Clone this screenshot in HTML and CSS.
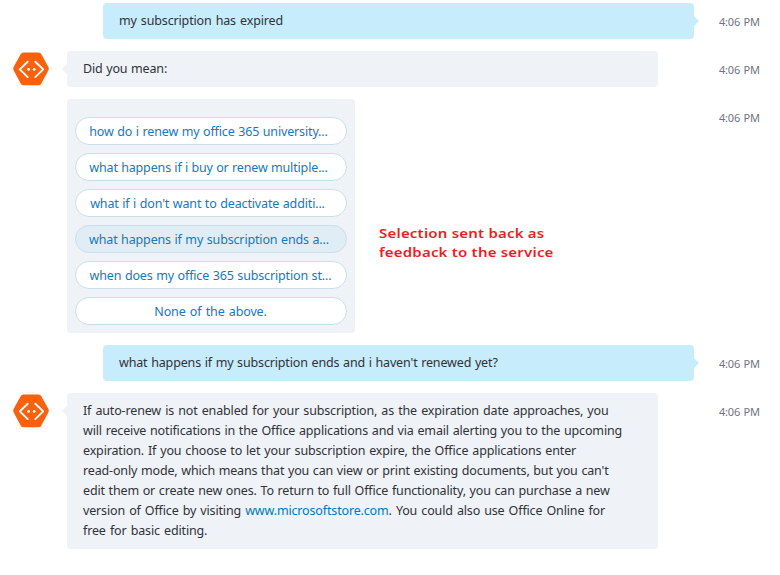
FILE: index.html
```html
<!DOCTYPE html>
<html lang="en">
<head>
<meta charset="utf-8">
<title>Bot conversation</title>
<link rel="stylesheet" href="styles.css">
</head>
<body>
<svg class="defs" width="0" height="0" aria-hidden="true">
  <symbol id="bot" viewBox="0 0 36 34">
    <path d="M10.5 .5H25.5Q27.3 .5 28.2 2L35.3 14.8Q36.2 16.7 35.3 18.6L28.2 31.7Q27.3 33.2 25.5 33.2H10.5Q8.7 33.2 7.8 31.7L.7 18.6Q-.2 16.7 .7 14.8L7.8 2Q8.7 .5 10.5 .5Z" fill="#f9610d"/>
    <path d="M14.7 9.7L6.8 17.4L14.7 25.1M22.3 9.7L30.2 17.4L22.3 25.1" fill="none" stroke="#fff" stroke-width="1.9" stroke-linecap="round" stroke-linejoin="round"/>
    <circle cx="15.6" cy="17.4" r="1.4" fill="#fff"/><circle cx="21.2" cy="17.4" r="1.4" fill="#fff"/>
  </symbol>
  <symbol id="tail" viewBox="0 0 6 16"><path d="M6 0Q5.5 3 3 5L.8 7Q0 8 .8 9L3 11Q5.5 13 6 16Z" fill="currentColor"/></symbol>
</svg>
<main class="chat">
  <div class="row user">
    <div class="bubble"><p class="t1">my subscription has expired</p><svg class="tail"><use href="#tail"/></svg></div>
    <time>4:06 PM</time>
  </div>
  <div class="row">
    <svg class="avatar"><use href="#bot"/></svg>
    <div class="bubble"><p class="t2">Did you mean:</p><svg class="tail"><use href="#tail"/></svg></div>
    <time>4:06 PM</time>
  </div>
  <div class="row">
    <div class="card">
      <button class="b1">how do i renew my office 365 university...</button>
      <button class="b2">what happens if i buy or renew multiple...</button>
      <button class="b3">what if i don't want to deactivate additi...</button>
      <button class="b4 selected">what happens if my subscription ends a...</button>
      <button class="b5">when does my office 365 subscription st...</button>
      <button class="b6">None of the above.</button>
      <aside class="note"><span>Selection sent back as</span><span>feedback to the service</span></aside>
    </div>
    <time>4:06 PM</time>
  </div>
  <div class="row user">
    <div class="bubble"><p class="t3">what happens if my subscription ends and i haven't renewed yet?</p><svg class="tail"><use href="#tail"/></svg></div>
    <time>4:06 PM</time>
  </div>
  <div class="row">
    <svg class="avatar"><use href="#bot"/></svg>
    <div class="bubble">
      <p class="a1">If auto-renew is not enabled for your subscription, as the expiration date approaches, you</p>
      <p class="a2">will receive notifications in the Office applications and via email alerting you to the upcoming</p>
      <p class="a3">expiration. If you choose to let your subscription expire, the Office applications enter</p>
      <p class="a4">read-only mode, which means that you can view or print existing documents, but you can't</p>
      <p class="a5">edit them or create new ones. To return to full Office functionality, you can purchase a new</p>
      <p class="a6">version of Office by visiting <a href="#">www.microsoftstore.com</a>. You could also use Office Online for</p>
      <p class="a7">free for basic editing.</p>
      <svg class="tail"><use href="#tail"/></svg>
    </div>
    <time>4:06 PM</time>
  </div>
</main>
</body>
</html>
```
FILE: styles.css
```css
* { box-sizing: border-box; }
body { margin: 0; background: #fff; color: #303238; font: 12.5px/20px "Noto Sans", sans-serif; }
.defs { position: absolute; }
.chat { width: 780px; height: 575px; padding-top: 3px; display: flex; flex-direction: column; gap: 12px; overflow: hidden; }
.row { display: grid; grid-template-columns: 54px 627px 1fr; padding-left: 13px; align-items: start; }
.avatar { grid-column: 1; grid-row: 1; width: 36px; height: 34px; margin-top: 1px; }
.bubble { grid-column: 2; grid-row: 1; position: relative; width: 591px; min-height: 36px; padding: 8px 16px; border-radius: 4px; background: #eff2f7; }
.user .bubble { margin-left: 36px; background: #c7ecfc; }
.tail { position: absolute; left: -5px; top: 10px; width: 6px; height: 16px; color: #eff2f7; }
.user .tail { left: auto; right: -5px; color: #c7ecfc; transform: scaleX(-1); }
p { margin: 0; white-space: nowrap; letter-spacing: -.15px; }
a { color: #0078c1; text-decoration: none; }
time { grid-column: 3; grid-row: 1; padding: 9px 0 0 25px; font-size: 11px; letter-spacing: -.2px; word-spacing: .8px; color: #6d7480; white-space: nowrap; }
.card { grid-column: 2; grid-row: 1; position: relative; width: 288px; height: 234px; padding: 18px 8px 8px; display: flex; flex-direction: column; gap: 8px; border-radius: 4px; background: #eff2f7; }
button { width: 100%; height: 28px; padding: 1px 5px 0 0; border: 1px solid #c8e0ea; border-radius: 14px; background: #fff; color: #1678bd; font: inherit; line-height: 25px; letter-spacing: -.15px; word-spacing: .5px; white-space: nowrap; }
.selected { background: #e0edf5; }

.t1 { word-spacing: 1px; }
.t2 { word-spacing: .5px; }
.t3 { word-spacing: .6px; }
.a1 { word-spacing: 1.04px; }
.a2 { word-spacing: .67px; }
.a3 { word-spacing: .87px; }
.a4 { word-spacing: .6px; }
.a5 { word-spacing: .62px; }
.a6 { word-spacing: 1.02px; }
.a7 { word-spacing: 1.1px; }
.b2 { word-spacing: .3px; }
.b3 { padding-right: 7px; }
.b4 { padding-right: 4px; }
.b5, .b6 { padding-right: 1px; }
.b6 { word-spacing: 1.2px; }

.note { position: absolute; left: 312px; top: 125px; display: flex; flex-direction: column; color: #ed1c24; font: 600 13px/19px "Noto Sans", sans-serif; letter-spacing: .18px; white-space: nowrap; transform: scaleX(1.153); transform-origin: left; }
```
